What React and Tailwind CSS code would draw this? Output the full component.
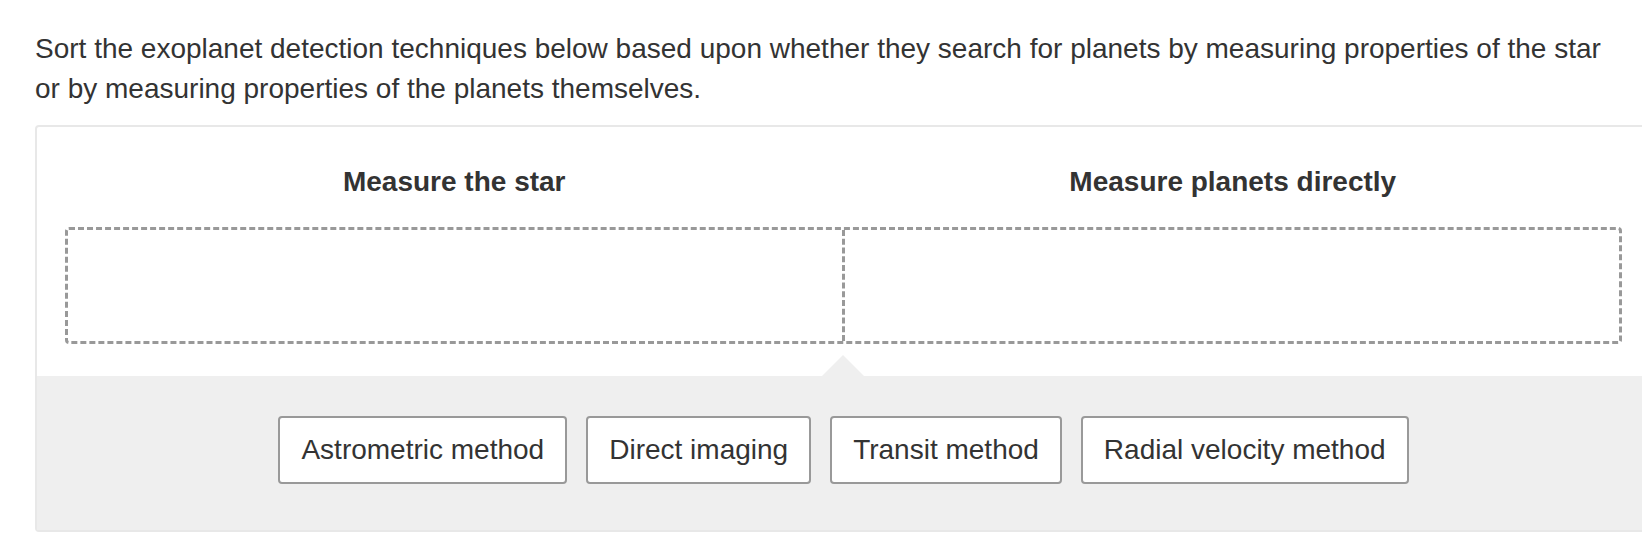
import React from "react";

// Items to sort
const techniques = [
  "Astrometric method",
  "Direct imaging",
  "Transit method",
  "Radial velocity method",
];

const App = () => {
  return (
    <div className="w-[1642px] h-[558px] overflow-hidden bg-white text-[#333] font-['Liberation_Sans',Arial,sans-serif]">
      <div className="w-[1652px] pl-[35px]">
        {/* Prompt */}
        <p className="w-[1582px] pt-[29px] text-[28px] leading-[40px] text-[#333]">
          Sort the exoplanet detection techniques below based upon whether they search for planets by measuring properties of the star or by measuring properties of the planets themselves.
        </p>

        {/* Sorting widget */}
        <div className="mt-[16px] w-[1617px] border-2 border-[#e8e8e8] rounded-[4px]">
          <div className="px-[28px] pt-[35px] pb-[32px] bg-white rounded-t-[4px]">
            <div className="grid grid-cols-2">
              <h3 className="text-center text-[28px] leading-[40px] font-bold text-[#333]">Measure the star</h3>
              <h3 className="text-center text-[28px] leading-[40px] font-bold text-[#333]">Measure planets directly</h3>
            </div>
            <div className="mt-[25px] h-[117px] flex border-[3px] border-dashed border-[#999] rounded-[4px]">
              <div className="flex-1 border-r-[3px] border-dashed border-[#999]" />
              <div className="flex-1" />
            </div>
          </div>

          {/* Item bank */}
          <div className="relative bg-[#efefef] pt-[40px] pb-[46px] flex justify-center gap-[19px]">
            <div className="absolute -top-[21px] left-1/2 -ml-[22px] w-0 h-0 border-l-[21px] border-r-[21px] border-b-[21px] border-l-transparent border-r-transparent border-b-[#efefef]" />
            {techniques.map((t) => (
              <div
                key={t}
                className="h-[68px] px-[21px] flex items-center bg-white border-2 border-[#999] rounded-[4px] text-[28px] text-[#333] whitespace-nowrap"
              >
                {t}
              </div>
            ))}
          </div>
        </div>
      </div>
    </div>
  );
};

export default App;
